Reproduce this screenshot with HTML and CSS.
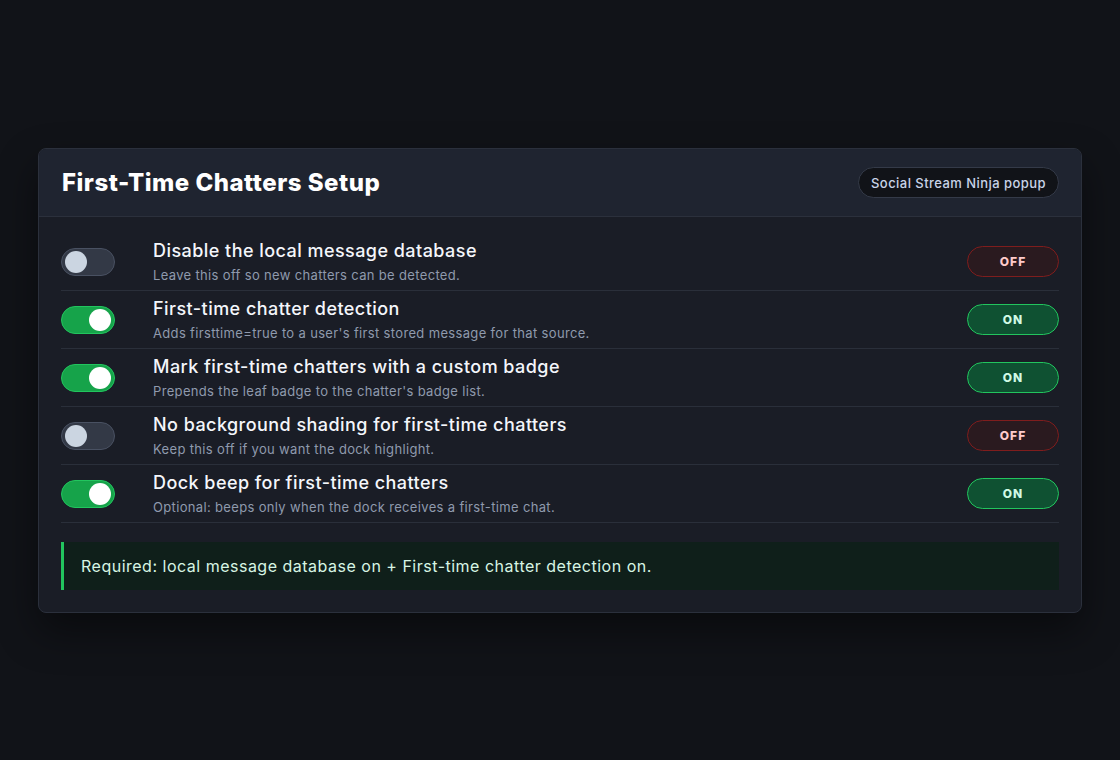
FILE: index.html
```html
<!DOCTYPE html>
<html lang="en">
<head>
<meta charset="utf-8">
<title>First-Time Chatters Setup</title>
<link rel="stylesheet" href="styles.css">
</head>
<body>
<div class="page">
  <section class="card">
    <header class="card-head">
      <h1 class="title">First-Time Chatters Setup</h1>
      <span class="pill">Social Stream Ninja popup</span>
    </header>
    <div class="card-body">
      <div class="row">
        <span class="toggle"><span class="knob"></span></span>
        <div class="text">
          <div class="row-title">Disable the local message database</div>
          <div class="row-desc">Leave this off so new chatters can be detected.</div>
        </div>
        <span class="badge badge-off">OFF</span>
      </div>
      <div class="row">
        <span class="toggle on"><span class="knob"></span></span>
        <div class="text">
          <div class="row-title">First-time chatter detection</div>
          <div class="row-desc">Adds firsttime=true to a user's first stored message for that source.</div>
        </div>
        <span class="badge badge-on">ON</span>
      </div>
      <div class="row">
        <span class="toggle on"><span class="knob"></span></span>
        <div class="text">
          <div class="row-title">Mark first-time chatters with a custom badge</div>
          <div class="row-desc">Prepends the leaf badge to the chatter's badge list.</div>
        </div>
        <span class="badge badge-on">ON</span>
      </div>
      <div class="row">
        <span class="toggle"><span class="knob"></span></span>
        <div class="text">
          <div class="row-title">No background shading for first-time chatters</div>
          <div class="row-desc">Keep this off if you want the dock highlight.</div>
        </div>
        <span class="badge badge-off">OFF</span>
      </div>
      <div class="row">
        <span class="toggle on"><span class="knob"></span></span>
        <div class="text">
          <div class="row-title">Dock beep for first-time chatters</div>
          <div class="row-desc">Optional: beeps only when the dock receives a first-time chat.</div>
        </div>
        <span class="badge badge-on">ON</span>
      </div>
      <div class="notice">Required: local message database on + First-time chatter detection on.</div>
    </div>
  </section>
</div>
</body>
</html>
```

FILE: styles.css
```css
* { box-sizing: border-box; }
html, body { margin: 0; padding: 0; }
body {
  background: #111318;
  font-family: "Inter", "DejaVu Sans", sans-serif;
  color: #f1f5f9;
  width: 1120px;
  height: 760px;
  overflow: hidden;
}
.page {
  padding: 148px 38px 0 38px;
}
.card {
  background: #1a1d26;
  border: 1px solid #2b303c;
  border-radius: 8px;
  overflow: hidden;
  box-shadow: 0 18px 40px rgba(0, 0, 0, 0.45);
}
.card-head {
  display: flex;
  align-items: center;
  justify-content: space-between;
  height: 68px;
  padding: 0 22px 0 23px;
  background: #1f2430;
  border-bottom: 1px solid #2b303c;
}
.title {
  margin: 0;
  font-size: 24px;
  font-weight: 800;
  letter-spacing: 0.5px;
  color: #ffffff;
}
.pill {
  display: inline-flex;
  align-items: center;
  height: 31px;
  padding: 0 12px;
  border-radius: 16px;
  background: #111318;
  border: 1px solid #343a48;
  color: #c9d4e8;
  font-size: 13px;
  font-weight: 500;
  letter-spacing: 0.45px;
}
.card-body {
  padding: 16px 22px 22px 22px;
}
.row {
  display: grid;
  grid-template-columns: 92px 1fr auto;
  align-items: center;
  height: 58px;
  border-bottom: 1px solid #2a2f3a;
}
.toggle {
  position: relative;
  display: block;
  width: 54px;
  height: 28px;
  border-radius: 14px;
  background: #333946;
  border: 1px solid #495162;
}
.toggle .knob {
  position: absolute;
  top: 2px;
  left: 3px;
  width: 22px;
  height: 22px;
  border-radius: 50%;
  background: #cbd5e1;
}
.toggle.on {
  background: #16a34a;
  border-color: #22c55e;
}
.toggle.on .knob {
  left: auto;
  right: 3px;
  background: #ffffff;
}
.text {
  display: flex;
  flex-direction: column;
  gap: 5px;
}
.row-title {
  font-size: 18px;
  font-weight: 500;
  color: #f4f6fb;
  line-height: 22px;
  letter-spacing: 0.45px;
}
.row-desc {
  font-size: 13px;
  color: #8f9aad;
  line-height: 16px;
  letter-spacing: 0.34px;
}
.badge {
  display: inline-flex;
  align-items: center;
  justify-content: center;
  width: 92px;
  height: 31px;
  border-radius: 16px;
  font-size: 12px;
  font-weight: 800;
  letter-spacing: 1px;
}
.badge-off {
  background: #2a1a1f;
  border: 1px solid #7f1d1d;
  color: #fecaca;
}
.badge-on {
  background: #0f5132;
  border: 1px solid #22c55e;
  color: #d1fae5;
}
.notice {
  margin-top: 19px;
  height: 48px;
  display: flex;
  align-items: center;
  padding-left: 17px;
  background: #0f1f1a;
  border-left: 3px solid #22c55e;
  color: #d7f5e4;
  font-size: 16px;
  letter-spacing: 0.5px;
}
```
